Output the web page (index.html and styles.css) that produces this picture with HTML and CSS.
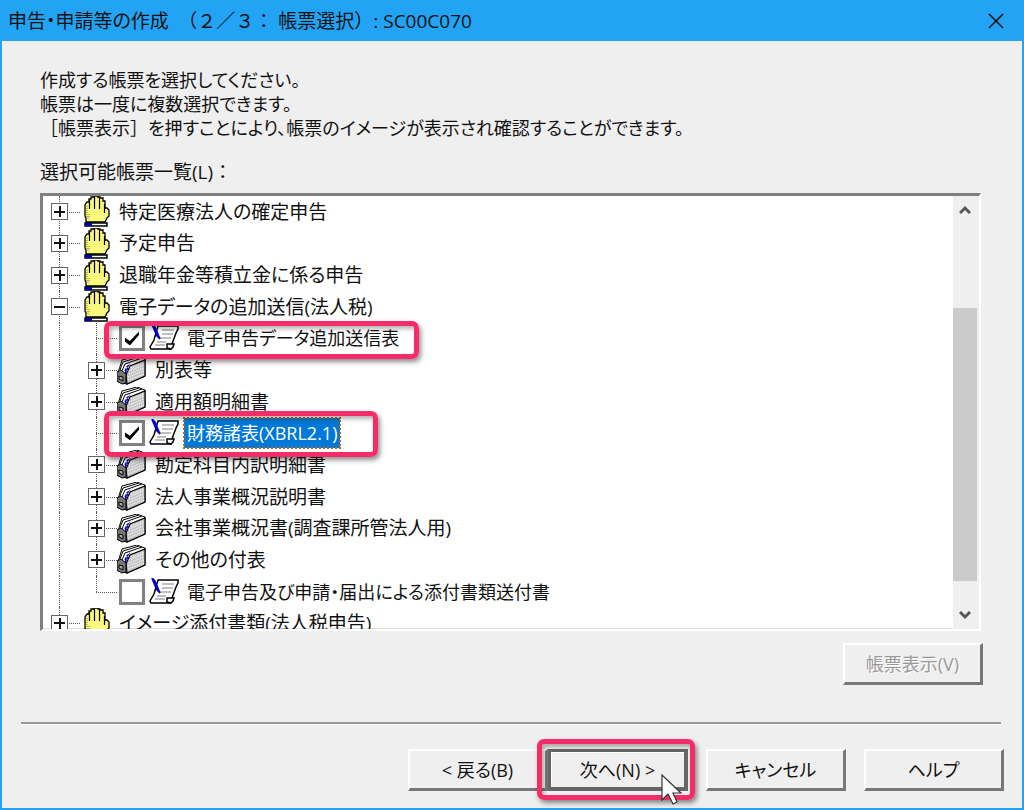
FILE: index.html
```html
<!DOCTYPE html>
<html lang="ja">
<head>
    <meta charset="UTF-8">
    <meta name="viewport" content="width=device-width, initial-scale=1.0">
    <title>申告・申請等の作成</title>
    <link rel="stylesheet" href="styles.css">
</head>
<body>
    <svg class="sprites" aria-hidden="true">
        <symbol id="hand" viewBox="0 0 26 31">
            <path d="M2 26V22L1 20V9L3 6H5V3H7V1H10V0H14V1H16V2H19V5H21V12H23L25 14V20L23 22L21 26Z" fill="#f8f87e" stroke="#000" stroke-width="1.300"/>
            <path d="M3 10V20L5 24M5 18V22" fill="none" stroke="#a8a848" stroke-width="1.500" stroke-dasharray="1 1"/>
            <path d="M5.500 4V13M10.500 1V13M15.500 2V13M20.500 8V17" fill="none" stroke="#000" stroke-width="1.200"/>
            <path d="M1 27H23V30H1Z" fill="#fff" stroke="#000" stroke-width="1.500"/>
            <path d="M1 27H8V30H1Z" fill="#0000a8"/>
        </symbol>
        <symbol id="binder" viewBox="0 0 29 29">
            <path d="M1 17L5 4L20 0L25 2L28 3V20L10 28L1 26Z" fill="#fff" stroke="#000" stroke-width="1"/>
            <path d="M3 14L6 6L22 1M5 15L8 8L25 2" fill="none" stroke="#000" stroke-width="1"/>
            <path d="M9 19L13 10L28 4V20L10 28Z" fill="#c4c4c4" stroke="#000" stroke-width="1.200"/>
            <path d="M14 12L27 7M12 15L27 9M12 18L27 12M11 21L27 15M11 24L27 18" stroke="#fff" stroke-width="1.200" stroke-dasharray="1 1"/>
            <path d="M8 15L10 11L13 8M8 17L11 12" fill="none" stroke="#0000c8" stroke-width="1.500" stroke-dasharray="3 1"/>
            <path d="M0 16L4 14L9 18V27L5 28L0 25Z" fill="#777" stroke="#000" stroke-width="1"/>
            <path d="M2 20L6 21V25L2 23Z" fill="#aaa" stroke="#000" stroke-width="1"/>
        </symbol>
        <symbol id="form" viewBox="0 0 31 28">
            <path d="M9 2H29V5L27 9L23 20L22 25H2L1 23L5 16Z" fill="#fff" stroke="#000" stroke-width="1.500"/>
            <path d="M22 25L18 24L18 20L25 20L24 23Z" fill="#fff" stroke="#000" stroke-width="1.500"/>
            <path d="M13 6H25M13 10H24M10 14H22M8 18H17M6 21H16" stroke="#aaa" stroke-width="1.300"/>
            <path d="M3 0L6 3L11 15L8 12L4 3Z" fill="#0000c8" stroke="#0000c8" stroke-width="1.500"/>
        </symbol>
    </svg>

    <div class="window">
        <header class="titlebar">
            <h1>申告・申請等の作成<span class="full">　（２／３：</span> 帳票選択<span class="full">）</span>: SC00C070</h1>
            <button class="close" aria-label="閉じる">
                <svg width="16" height="16" viewBox="0 0 16 16"><path d="M1 1L15 15M15 1L1 15" stroke="#111" stroke-width="1.500"/></svg>
            </button>
        </header>

        <main class="content">
            <p class="intro">作成する帳票を選択してください。<br>帳票は一度に複数選択できます。<br><span class="full">［</span>帳票表示<span class="full">］</span>を押すことにより、帳票のイメージが表示され確認することができます。</p>
            <h2 class="list-label" id="list-label">選択可能帳票一覧(L)<span class="full">：</span></h2>

            <div class="tree-box">
                <ul class="tree" aria-labelledby="list-label">
                    <li class="row">
                        <span class="guide"><button class="expander" aria-label="展開"></button></span>
                        <svg class="hand"><use href="#hand"/></svg><span class="text">特定医療法人の確定申告</span>
                    </li>
                    <li class="row">
                        <span class="guide"><button class="expander" aria-label="展開"></button></span>
                        <svg class="hand"><use href="#hand"/></svg><span class="text">予定申告</span>
                    </li>
                    <li class="row">
                        <span class="guide"><button class="expander" aria-label="展開"></button></span>
                        <svg class="hand"><use href="#hand"/></svg><span class="text">退職年金等積立金に係る申告</span>
                    </li>
                    <li class="row">
                        <span class="guide"><button class="expander open" aria-label="折りたたむ"></button></span>
                        <svg class="hand"><use href="#hand"/></svg><span class="text">電子データの追加送信(法人税)</span>
                    </li>
                    <li class="row">
                        <span class="guide pass"></span><span class="guide"></span>
                        <input type="checkbox" id="form1" checked>
                        <svg class="form"><use href="#form"/></svg><label class="text" for="form1">電子申告データ追加送信表</label>
                        <span class="mark mark-first"></span>
                    </li>
                    <li class="row">
                        <span class="guide pass"></span><span class="guide"><button class="expander" aria-label="展開"></button></span>
                        <svg class="binder"><use href="#binder"/></svg><span class="text">別表等</span>
                    </li>
                    <li class="row">
                        <span class="guide pass"></span><span class="guide"><button class="expander" aria-label="展開"></button></span>
                        <svg class="binder"><use href="#binder"/></svg><span class="text">適用額明細書</span>
                    </li>
                    <li class="row">
                        <span class="guide pass"></span><span class="guide"></span>
                        <input type="checkbox" id="form2" checked>
                        <svg class="form"><use href="#form"/></svg><label class="text selected" for="form2">財務諸表(XBRL2.1)</label>
                        <span class="mark mark-second"></span>
                    </li>
                    <li class="row">
                        <span class="guide pass"></span><span class="guide"><button class="expander" aria-label="展開"></button></span>
                        <svg class="binder"><use href="#binder"/></svg><span class="text">勘定科目内訳明細書</span>
                    </li>
                    <li class="row">
                        <span class="guide pass"></span><span class="guide"><button class="expander" aria-label="展開"></button></span>
                        <svg class="binder"><use href="#binder"/></svg><span class="text">法人事業概況説明書</span>
                    </li>
                    <li class="row">
                        <span class="guide pass"></span><span class="guide"><button class="expander" aria-label="展開"></button></span>
                        <svg class="binder"><use href="#binder"/></svg><span class="text">会社事業概況書(調査課所管法人用)</span>
                    </li>
                    <li class="row">
                        <span class="guide pass"></span><span class="guide"><button class="expander" aria-label="展開"></button></span>
                        <svg class="binder"><use href="#binder"/></svg><span class="text">その他の付表</span>
                    </li>
                    <li class="row">
                        <span class="guide pass"></span><span class="guide last"></span>
                        <input type="checkbox" id="form3">
                        <svg class="form"><use href="#form"/></svg><label class="text" for="form3">電子申告及び申請・届出による添付書類送付書</label>
                    </li>
                    <li class="row">
                        <span class="guide"><button class="expander" aria-label="展開"></button></span>
                        <svg class="hand"><use href="#hand"/></svg><span class="text">イメージ添付書類(法人税申告)</span>
                    </li>
                </ul>
                <div class="scrollbar">
                    <button class="arrow" aria-label="上へ"><svg width="12" height="10" viewBox="0 0 12 10"><path d="M1 8L6 3L11 8" fill="none" stroke="#555" stroke-width="3"/></svg></button>
                    <div class="track"><div class="thumb"></div></div>
                    <button class="arrow" aria-label="下へ"><svg width="12" height="10" viewBox="0 0 12 10"><path d="M1 2L6 7L11 2" fill="none" stroke="#555" stroke-width="3"/></svg></button>
                </div>
            </div>

            <div class="preview">
                <button class="btn" disabled>帳票表示(V)</button>
            </div>
        </main>

        <footer class="actions">
            <button class="btn">&lt; 戻る(B)</button>
            <div class="next">
                <button class="btn primary">次へ(N) &gt;</button>
                <span class="mark mark-next"></span>
                <svg class="cursor" width="22" height="32" viewBox="0 0 22 32"><path d="M1 1V26L7 20L12 30L16 28L12 19H20Z" fill="#fff" stroke="#333" stroke-width="1.200"/></svg>
            </div>
            <button class="btn cancel">キャンセル</button>
            <button class="btn">ヘルプ</button>
        </footer>
    </div>
</body>
</html>
```
FILE: styles.css
```css
* {
    box-sizing: border-box;
}

body {
    margin: 0;
    font-family: "Open Sans", "Noto Sans CJK JP", sans-serif;
    font-size: 18px;
    line-height: 24px;
    font-feature-settings: "palt";
    color: #111;
}

button {
    font: inherit;
    font-feature-settings: inherit;
    color: inherit;
    padding: 0;
}

.sprites {
    position: absolute;
    width: 0;
    height: 0;
}

.full {
    font-feature-settings: normal;
}

.window {
    display: flex;
    flex-direction: column;
    height: 100vh;
    background-color: #efefef;
    border: 2px solid #25a2ef;
    border-top: 0;
}

/* Title bar */
.titlebar {
    display: flex;
    align-items: center;
    justify-content: space-between;
    height: 41px;
    flex: none;
    padding: 0 18px 0 6px;
    background-color: #22a3f3;
}

.titlebar h1 {
    margin: 0;
    font-size: 19px;
    font-weight: normal;
    white-space: pre;
}

.close {
    display: flex;
    border: 0;
    background: none;
}

/* Main area */
.content {
    display: flex;
    flex-direction: column;
    flex: 1;
    min-height: 0;
    padding: 27px 41px 37px 38px;
}

.intro {
    margin: 0 0 20px;
}

.list-label {
    margin: 0 0 9px;
    font-size: 19px;
    font-weight: normal;
}

.tree-box {
    display: flex;
    flex: 1;
    min-height: 0;
    overflow: hidden;
    background-color: #fff;
    border: 3px solid #808080;
    border-right: 2px solid #fff;
    border-bottom: 2px solid #fff;
    box-shadow: inset -1px -1px #ddd;
}

.tree {
    display: grid;
    grid-auto-rows: 1fr;
    flex: 1;
    height: 443px;
    margin: 0;
    padding: 0;
    list-style: none;
    font-size: 19px;
}

.row {
    position: relative;
    display: flex;
    align-items: center;
    white-space: nowrap;
}

.row svg {
    flex: none;
}

/* Dotted connector lines */
.guide {
    position: relative;
    display: flex;
    align-items: center;
    align-self: stretch;
    width: 37px;
    padding-left: 8px;
}

.guide::before {
    content: "";
    position: absolute;
    left: 16px;
    top: 0;
    bottom: 0;
    border-left: 1px dotted #555;
}

.guide::after {
    content: "";
    position: absolute;
    left: 16px;
    right: 0;
    top: 50%;
    border-top: 1px dotted #555;
}

.pass::after {
    display: none;
}

.last::before {
    bottom: 50%;
}

.expander {
    position: relative;
    z-index: 1;
    width: 17px;
    height: 17px;
    border: 1px solid #666;
    background:
        linear-gradient(#111, #111) center / 11px 2px no-repeat,
        linear-gradient(#111, #111) center / 2px 11px no-repeat,
        #fff;
}

.expander.open {
    background: linear-gradient(#111, #111) center / 11px 2px no-repeat, #fff;
}

.hand {
    width: 26px;
    height: 31px;
    margin: 0 6px 0 4px;
}

.binder {
    width: 29px;
    height: 29px;
    margin-right: 6px;
}

.form {
    width: 31px;
    height: 28px;
    margin: 0 4px;
}

.row input {
    appearance: none;
    display: grid;
    place-items: center;
    flex: none;
    width: 26px;
    height: 26px;
    margin: 0 0 0 2px;
    border: 3px solid #808080;
    background-color: #fff;
}

.row input:checked::before {
    content: "";
    width: 14px;
    height: 14px;
    background-color: #000;
    clip-path: polygon(0 45%, 35% 68%, 100% 0, 100% 25%, 35% 100%, 0 72%);
}

.text {
    padding: 3px;
}

label.text {
    font-size: 18px;
}

.selected {
    background-color: #0078d7;
    color: #fff;
    outline: 2px dotted #b5651d;
    outline-offset: -1px;
}

/* Pink callout frames */
.mark {
    position: absolute;
    z-index: 2;
    border: 5px solid #f52c68;
    border-radius: 7px;
    box-shadow: 2px 3px 5px rgba(0, 0, 0, 0.45), inset 2px 3px 4px rgba(0, 0, 0, 0.3);
    pointer-events: none;
}

.mark-first {
    left: 61px;
    top: -2px;
    width: 315px;
    height: 38px;
}

.mark-second {
    left: 61px;
    top: -6px;
    width: 274px;
    height: 46px;
}

.mark-next {
    inset: -10px -7px -9px -11px;
}

/* Scrollbar */
.scrollbar {
    display: flex;
    flex-direction: column;
    width: 26px;
    padding-right: 2px;
    background-color: #efefef;
}

.arrow {
    display: flex;
    align-items: center;
    justify-content: center;
    height: 28px;
    border: 0;
    background: none;
}

.track {
    display: flex;
    flex-direction: column;
    flex: 1;
    padding: 84px 0 20px;
}

.thumb {
    flex: 1;
    background-color: #cbcbcb;
}

/* Buttons */
.btn {
    width: 140px;
    height: 42px;
    background-color: #efefef;
    border: 2px solid #fff;
    border-right: 3px solid #777;
    border-bottom: 3px solid #777;
}

.btn:disabled {
    color: #999;
    text-shadow: 1px 1px #fff;
}

.btn.primary {
    border: 3px solid #666;
    border-right-width: 4px;
    border-bottom-width: 4px;
    box-shadow: inset 1px 1px #fff;
}

.preview {
    display: flex;
    justify-content: flex-end;
    margin: 12px -2px 0 0;
}

.actions {
    display: flex;
    justify-content: flex-end;
    flex: none;
    margin: 0 21px 0 19px;
    padding: 25px 0 17px;
    border-top: 2px solid #999;
    box-shadow: inset 0 1px #fff;
}

.actions .btn:last-child {
    margin-right: -3px;
}

.next {
    position: relative;
}

.cancel {
    margin: 0 18px;
}

.cursor {
    position: absolute;
    z-index: 3;
    right: 5px;
    top: 25px;
}
```
